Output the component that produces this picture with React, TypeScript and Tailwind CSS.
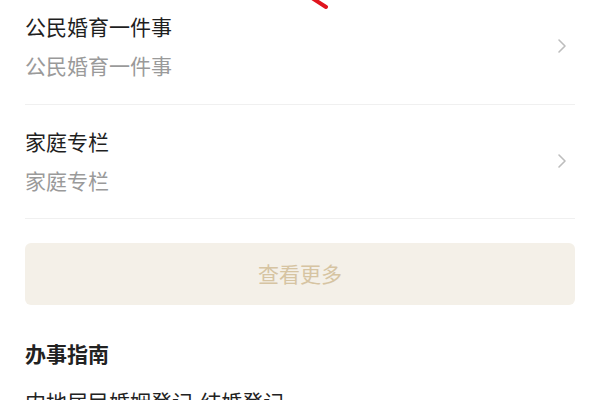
import React from 'react';

const font = { fontFamily: '"Noto Sans CJK SC", "Noto Sans", sans-serif' };

interface Item {
    title: string;
    desc: string;
}

const items: Item[] = [
    { title: '公民婚育一件事', desc: '公民婚育一件事' },
    { title: '家庭专栏', desc: '家庭专栏' },
];

const Chevron = () => (
    <svg width="10" height="16" viewBox="0 0 10 16" fill="none">
        <path d="M2 2l6 6-6 6" stroke="#bdbdbd" strokeWidth="1.6" strokeLinecap="round" strokeLinejoin="round" />
    </svg>
);

export default function App() {
    return (
        <div className="relative w-[600px] h-[400px] overflow-hidden bg-white" style={font}>
            {/* 红色标注残留 */}
            <svg className="absolute left-[308px] top-0" width="24" height="12" viewBox="0 0 24 12">
                <path d="M4 -2l14 9" stroke="#e0141e" strokeWidth="4" strokeLinecap="round" />
            </svg>

            <div className="px-[25px]">
                {items.map((item, i) => (
                    <div
                        key={i}
                        className={`flex items-center justify-between border-b border-[#f0f0f0] ${i === 0 ? 'pt-[14px] pb-[27px]' : 'pt-[24px] pb-[26px]'}`}
                    >
                        <div className="flex flex-col gap-[15px]">
                            <div className="text-[21px] leading-[24px] text-[#1f1f1f]">{item.title}</div>
                            <div className="text-[21px] leading-[24px] text-[#9a9a9a]">{item.desc}</div>
                        </div>
                        <div className="pr-[8px]">
                            <Chevron />
                        </div>
                    </div>
                ))}

                <button className="mt-[24px] w-full h-[62px] rounded-[6px] bg-[#f4f0e8] text-[21px] text-[#d6c4a2] flex items-center justify-center">
                    查看更多
                </button>

                <div className="mt-[36px] text-[21px] leading-[24px] font-bold text-[#222]">办事指南</div>
                <div className="mt-[24px] text-[21px] leading-[24px] text-[#222]">内地居民婚姻登记-结婚登记</div>
            </div>
        </div>
    );
}
